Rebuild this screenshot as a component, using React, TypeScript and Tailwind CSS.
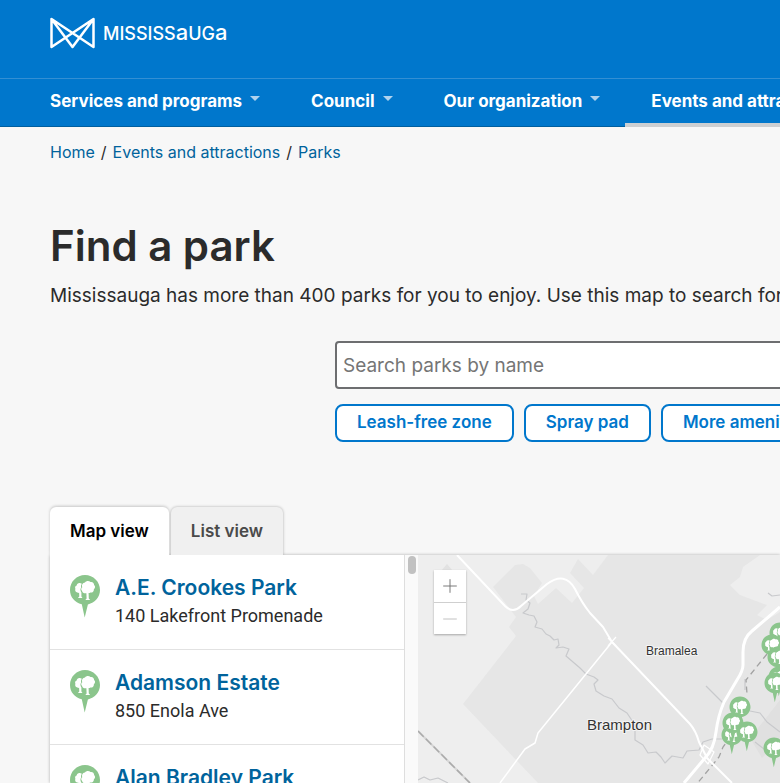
import React from "react";
import { Minus, Plus } from "lucide-react";

const navItems = [
  { label: "Services and programs", active: false },
  { label: "Council", active: false },
  { label: "Our organization", active: false },
  { label: "Events and attractions", active: true },
];

const crumbs = ["Home", "Events and attractions", "Parks"];

const filters = ["Leash-free zone", "Spray pad", "More amenities"];

const parks = [
  { name: "A.E. Crookes Park", address: "140 Lakefront Promenade" },
  { name: "Adamson Estate", address: "850 Enola Ave" },
  { name: "Alan Bradley Park", address: "1460 Tyandaga Park Drive" },
];

const markers = [
  [780, 633],
  [772, 645],
  [778, 657],
  [779, 677],
  [775, 683],
  [740, 707],
  [732, 735],
  [733, 723],
  [747, 732],
  [774, 748],
];

/* Pin with two trees, drawn in a 30 x 43 box. */
function PinShape() {
  return (
    <>
      <path
        d="M15 0C6.700 0 0 6.700 0 15c0 7 4.600 12.500 11.800 14.300L14.700 42.500 17.900 29.400C25 27.800 30 22 30 15 30 6.700 23.300 0 15 0Z"
        fill="#8bc58c"
      />
      <path
        d="M11 8.500C9 7.400 6.800 8.600 6.700 10.500 5.200 11 4.700 12.500 5.400 13.700 4.700 15.500 5.600 17.300 7.400 17.500 8 18 8.600 18 9.100 17.800L9.300 21.500 7.900 23H12.500L11.400 21.500V17.500C10 15.500 10.300 13.400 11.200 12.500 10.800 11 11 9.700 12 8.800Z"
        fill="#fff"
      />
      <path
        d="M15 7.500C16 5.600 19.200 5.500 20.500 7 22.500 6.500 24.300 8 24.100 10 25.600 11.300 25.200 13.300 23.900 14.200 24 16.500 22.200 17.900 20.400 17.500 19.700 18 19.200 18.100 18.600 18L18.800 23.500 20.200 25H15.300L16.600 23.500 16.400 18.200C14.500 18.800 12.300 17.600 12.100 16 10.800 14.800 11 13 12.300 12.200 11.400 9.800 12.800 7.800 15 7.500Z"
        fill="#fff"
      />
    </>
  );
}

function Logo() {
  return (
    <a href="#" aria-label="Mississauga" className="flex items-center gap-2 text-white">
      <svg width="45" height="32" viewBox="0 0 45 32" fill="none" stroke="currentColor" strokeWidth="2.500" strokeLinejoin="round">
        <path d="M1.500 2V30L43.500 2V30L1.500 2L22.500 30L43.500 2" />
      </svg>
      <span className="text-[18px] leading-6 font-medium">
        MISSISS<span className="text-[22px]">a</span>UG<span className="text-[22px]">a</span>
      </span>
    </a>
  );
}

function RegionMap() {
  return (
    <svg
      className="block h-full w-full"
      viewBox="418 555 362 228"
      preserveAspectRatio="xMinYMin slice"
      role="img"
      aria-label="Map of parks"
    >
      <rect x="418" y="555" width="362" height="228" fill="#eeeeee" />
      <path
        d="M608 555H760L743 567 740 577 730 585 740 595 767 605 757 615 767 620 780 612V783H538L463 704 516 636 509 627 516 617 493 587 515 565 523 564 530 568 542 583 534 596 538 604 556 588 572 603 584 588 570 573 578 559 593 575Z"
        fill="#e6e6e6"
      />
      <path d="M441 571 447 564 453 571Z" fill="#e2e2e2" />
      <path d="M780 700 766 718 750 738 762 758 780 740Z" fill="#e0e0e0" />
      <g fill="none" stroke="#c8c9cc" strokeWidth="1.200" strokeLinejoin="round">
        <path d="M521 594H527L526 600 530 603 528 609 523 613 529 615 534 616 537 622 535 627 542 629 546 634 550 636 554 640 558 639 559 645 556 648 563 647 569 649 566 656 573 662 580 668 586 674 594 677 598 680 594 684 596 691 604 696 612 699 619 708 627 713 635 725 635 740 643 745 648 753 656 752 661 757 665 763 672 756 683 758 687 751 699 750 703 742 712 739 722 739" />
        <path d="M706 686 724 704M750 711 760 713 767 722 780 732M768 593 772 596 780 595M745 679V690M755 742 769 753M418 780 424 777 430 780 438 778 448 783" />
      </g>
      <path d="M418 731 470 783" stroke="#d6d6d6" strokeWidth="2" />
      <path d="M418 731 470 783" stroke="#aaaaaa" strokeWidth="1.500" strokeDasharray="8 3" />
      <path d="M767 654 746 680 747 694M737 728 723 747 719 757 696 785" fill="none" stroke="#a2a2a2" strokeWidth="1.300" strokeDasharray="6 4" />
      <g fill="none" stroke="#ffffff" strokeLinejoin="round">
        <path d="M457 555 505 606Q513 614 521 606L528 600 547 584Q565 571 575 589 582 603 590 613L603 627 612 642 690 724Q696 731 699 742L707 758 732 783" strokeWidth="2" />
        <path d="M612 642 538 733 535 743 525 749 500 783" strokeWidth="1.500" />
        <path d="M780 607 752 631Q743 638 743 652V665Q743 671 737 680L724 702Q718 716 716 732 714 749 705 758L684 783" strokeWidth="3" />
        <path d="M704 745 714 752 708 764 700 755Z M608 638 616 646M616 637 608 646" strokeWidth="1.200" />
      </g>
      <g fill="#333333" stroke="#f4f4f4" strokeWidth="2" paintOrder="stroke" className="font-['Liberation_Sans',sans-serif]">
        <text x="646" y="655" fontSize="12">Bramalea</text>
        <text x="587" y="730" fontSize="15">Brampton</text>
      </g>
      {markers.map(([x, y]) => (
        <g key={`${x}-${y}`} transform={`translate(${x - 10.5} ${y - 10.5}) scale(0.700)`}>
          <PinShape />
        </g>
      ))}
    </svg>
  );
}

export default function App() {
  return (
    <div className="flex h-screen min-h-[783px] flex-col overflow-hidden bg-[#f7f7f7] font-[Inter,sans-serif] whitespace-nowrap text-[#2b2b2b]">
      <header className="shrink-0 border-b border-[#005f9f] bg-[#0077cc] text-white">
        <div className="flex h-[78px] items-start px-[50px] pt-[17px]">
          <Logo />
        </div>
        <nav className="flex h-12 border-t border-[#338fd3] pl-6">
          {navItems.map((item) => (
            <div key={item.label} className="relative flex shrink-0">
              <button
                type="button"
                className="flex items-center gap-2 pr-[25px] pb-1 pl-[26px] text-[17px] leading-6 font-bold"
              >
                {item.label}
                <span className="mb-1 border-x-[5px] border-t-[5px] border-x-transparent border-t-[#b0d3ee]" />
              </button>
              {item.active && <span className="absolute inset-x-0 -bottom-px h-1 bg-[#cccfd2]" />}
            </div>
          ))}
        </nav>
      </header>

      <main className="flex min-h-0 flex-1 flex-col pl-[50px]">
        <nav aria-label="Breadcrumb" className="flex pt-[15px] text-base leading-5">
          {crumbs.map((crumb, i) => (
            <React.Fragment key={crumb}>
              {i > 0 && <span className="px-1.5">/</span>}
              <a href="#" className="text-[#00639c]">{crumb}</a>
            </React.Fragment>
          ))}
        </nav>

        <h1 className="mt-[59px] text-[42px] leading-[50px] font-semibold">Find a park</h1>
        <p className="mt-[11px] text-[19px] leading-7">
          Mississauga has more than 400 parks for you to enjoy. Use this map to search for a park by name or amenity.
        </p>

        <form className="mt-[31px] ml-[285px]">
          <label htmlFor="park-search" className="sr-only">Search parks by name</label>
          <input
            id="park-search"
            type="text"
            placeholder="Search parks by name"
            className="block h-12 w-[610px] rounded-sm border-2 border-[#6d6e70] bg-white px-1.5 text-[19px] placeholder:text-[#757575]"
          />
          <div className="mt-[15px] flex gap-2.5">
            {filters.map((filter) => (
              <button
                key={filter}
                type="button"
                className="h-[38px] shrink-0 rounded-lg border-2 border-[#0077cc] bg-white px-5 pb-0.5 text-[17px] leading-6 font-semibold text-[#0077cc]"
              >
                {filter}
              </button>
            ))}
          </div>
        </form>

        <div role="tablist" className="relative mt-[65px] flex text-[17px] leading-6 font-semibold">
          <button role="tab" aria-selected="true" type="button" className="relative z-10 h-12 rounded-t-md bg-white px-5 text-black shadow-[0_-1px_3px_rgba(0,0,0,0.2)]">
            Map view
          </button>
          <button role="tab" aria-selected="false" type="button" className="ml-0.5 h-12 rounded-t-md bg-[#f0f0f0] px-5 text-[#4a4a4a] shadow-[0_0_3px_rgba(0,0,0,0.3)]">
            List view
          </button>
        </div>

        <section className="flex min-h-0 flex-1 bg-white shadow-[0_0_3px_rgba(0,0,0,0.3)]">
          <ul className="relative z-10 w-[355px] shrink-0 overflow-hidden border-r border-[#dedede] bg-white">
            {parks.map((park) => (
              <li key={park.name} className="flex h-[95px] gap-[15px] border-b border-[#e2e2e2] px-5 pt-5">
                <svg width="30" height="43" viewBox="0 0 30 43" aria-hidden="true" className="shrink-0">
                  <PinShape />
                </svg>
                <div>
                  <a href="#" className="block text-[21px] leading-[26px] font-semibold text-[#00639c]">{park.name}</a>
                  <p className="font-[Roboto,sans-serif] text-[18px] leading-[30px]">{park.address}</p>
                </div>
              </li>
            ))}
          </ul>
          <div className="w-[13px] shrink-0 bg-[#fafafa] px-[3px] pt-px">
            <div className="h-[18px] w-2 rounded-full bg-[#c1c1c1]" />
          </div>
          <div className="relative min-w-0 flex-1">
            <RegionMap />
            <div className="absolute top-[15px] left-4 w-8 bg-white text-[#6e6e6e] shadow-[0_1px_2px_rgba(0,0,0,0.3)]">
              <button type="button" aria-label="Zoom in" className="flex h-8 w-8 items-center justify-center">
                <Plus size={22} strokeWidth={1} />
              </button>
              <button type="button" aria-label="Zoom out" className="flex h-8 w-8 items-center justify-center border-t border-[#cfcfcf] text-[#bcbcbc]">
                <Minus size={22} strokeWidth={1} />
              </button>
            </div>
          </div>
        </section>
      </main>
    </div>
  );
}
